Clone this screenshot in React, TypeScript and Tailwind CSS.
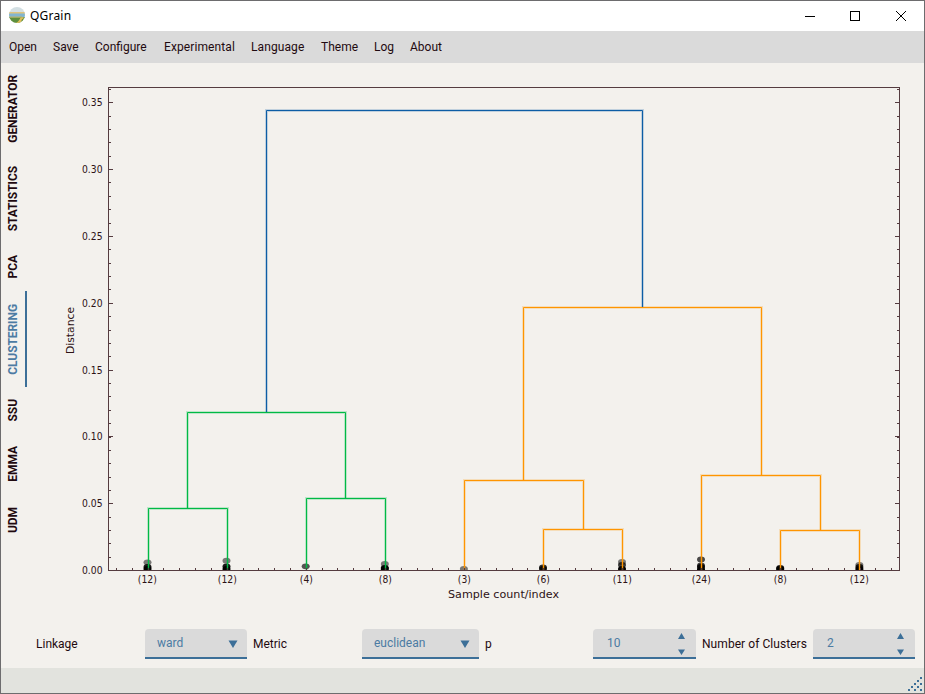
const INK = '#2d1215';
const AXIS = '#553c40';
const BLUE = '#0c5da5';
const GREEN = '#00b945';
const ORANGE = '#ff9500';

const menus = [
  ['Open', 'w-11'],
  ['Save', 'w-[42px]'],
  ['Configure', 'w-[69px]'],
  ['Experimental', 'w-[87px] tracking-[0.1px]'],
  ['Language', 'w-[70px] tracking-[0.1px]'],
  ['Theme', 'w-[53px]'],
  ['Log', 'w-9'],
  ['About', 'w-12'],
];

const tabs = [
  ['GENERATOR', 'h-[92px]'],
  ['STATISTICS', 'h-[88px]'],
  ['PCA', 'h-12'],
  ['CLUSTERING', 'h-24'],
  ['SSU', 'h-[46px]'],
  ['EMMA', 'h-[61px]'],
  ['UDM', 'h-[51px]'],
];

const majors = [
  [570, '0.00'], [503, '0.05'], [436, '0.10'], [370, '0.15'],
  [303, '0.20'], [236, '0.25'], [169, '0.30'], [102, '0.35'],
] as const;

const leaves = [
  [147, '(12)'], [227, '(12)'], [306, '(4)'], [385, '(8)'], [464, '(3)'],
  [543, '(6)'], [622, '(11)'], [701, '(24)'], [780, '(8)'], [859, '(12)'],
] as const;

// Each link: left x, left foot y, top y, right x, right foot y
const links: [string, number, number, number, number, number][] = [
  [GREEN, 148, 570, 508, 227, 570],
  [GREEN, 306, 570, 498, 385, 570],
  [GREEN, 187, 508, 412, 345, 498],
  [ORANGE, 543, 570, 529, 622, 570],
  [ORANGE, 464, 570, 480, 583, 529],
  [ORANGE, 780, 570, 530, 859, 570],
  [ORANGE, 701, 570, 475, 820, 530],
  [ORANGE, 523, 480, 307, 761, 475],
  [BLUE, 266, 412, 110, 642, 307],
];

// Sample markers: x, y, opacity
const dots: [number, number, number][] = [
  [147.5, 562.3, 0.5], [147.5, 567, 0.9], [147.5, 569, 1],
  [226.5, 560.7, 0.5], [226.5, 566.5, 0.9], [226.5, 569, 1],
  [305.7, 566.3, 0.65],
  [384.8, 564, 0.5], [384.8, 567.8, 0.95], [384.8, 569, 1],
  [463.9, 568.8, 0.5],
  [543, 567.5, 0.8], [543, 569, 0.8],
  [622, 562, 0.5], [622, 565, 0.75], [622, 569, 1],
  [701, 559.4, 0.7], [701, 565.5, 0.75], [701, 567, 0.9], [701, 569.5, 1],
  [780.2, 568, 0.9], [780.2, 569, 1],
  [859.4, 564.8, 0.5], [859.4, 567, 0.85], [859.4, 569, 1],
];

function Dendrogram() {
  const yMinor = Array.from({ length: 37 }, (_, i) => Math.round(570.2 - i * 13.37)).filter((y) => y > 87);
  const xMinor = Array.from({ length: 50 }, (_, i) => Math.round(116 + i * 15.82)).filter((x) => x < 899);
  return (
    <svg width="897" height="556" viewBox="27 63 897 556" className="block" fontFamily='"DejaVu Sans", sans-serif' fill={INK}>
      <defs>
        <clipPath id="plot"><rect x="109" y="88" width="790" height="482" /></clipPath>
      </defs>
      <g clipPath="url(#plot)">
        {dots.map(([x, y, o], i) => <ellipse key={i} cx={x} cy={y} rx="4" ry="2.9" fill="#000" opacity={o} />)}
      </g>
      {links.map(([c, x1, f1, t, x2, f2], i) => {
        const d = `M${x1 + 0.5} ${f1}V${t + 0.5}H${x2 + 0.5}V${f2}`;
        return (
          <g key={i} fill="none" stroke={c}>
            <path d={d} strokeWidth="3" opacity="0.22" />
            <path d={d} strokeWidth="1" />
          </g>
        );
      })}
      <g stroke={AXIS} fill="none" shapeRendering="crispEdges">
        <rect x="108.5" y="87.5" width="791" height="483" />
        {yMinor.map((y) => <path key={y} d={`M109 ${y + 0.5}h2M899 ${y + 0.5}h-2`} />)}
        {majors.map(([y]) => <path key={y} d={`M109 ${y + 0.5}h4M899 ${y + 0.5}h-4`} />)}
        {xMinor.map((x) => <path key={x} d={`M${x + 0.5} 570v-2`} />)}
      </g>
      <g fontSize="10">
        {majors.map(([y, s]) => <text key={s} x="82" y={y + 4} textLength="20.5" lengthAdjust="spacingAndGlyphs">{s}</text>)}
        {leaves.map(([x, s]) => (
          <text key={x} x={x + 0.3} y="583" textAnchor="middle" textLength={s.length === 4 ? 19 : 13} lengthAdjust="spacingAndGlyphs">{s}</text>
        ))}
      </g>
      <text x="448" y="598" fontSize="11" textLength="111" lengthAdjust="spacingAndGlyphs">Sample count/index</text>
      <text transform="translate(74 354) rotate(-90)" fontSize="11" textLength="47" lengthAdjust="spacingAndGlyphs">Distance</text>
    </svg>
  );
}

function Combo({ value, width }: { value: string; width: string }) {
  return (
    <div className={`${width} flex h-[30px] shrink-0 items-center justify-between rounded-t border-b-2 border-[#3c6f98] bg-[#dadada] pl-3 pr-[9px] text-[#4c7ba3]`}>
      <span>{value}</span>
      <svg width="10" height="8" viewBox="0 0 10 8" className="mt-0.5"><path d="M0.5 0.5h9L5 8z" fill="#3c6f98" /></svg>
    </div>
  );
}

function Spin({ value, width }: { value: string; width: string }) {
  return (
    <div className={`${width} flex h-[30px] shrink-0 items-center justify-between rounded-t border-b-2 border-[#3c6f98] bg-[#dadada] pl-3.5 pr-[11px] text-[#4c7ba3]`}>
      <span>{value}</span>
      <svg width="7" height="22" viewBox="0 0 7 22" className="mt-0.5" fill="#3c6f98">
        <path d="M0 6h7L3.5 0zM0 16.5h7L3.5 22z" />
      </svg>
    </div>
  );
}

export default function App() {
  return (
    <div className="flex h-[694px] w-[925px] flex-col overflow-hidden border border-[#6d6c6e] bg-[#f3f1ed] font-['Roboto',sans-serif] text-xs text-[#1f0a10]">
      <header className="flex h-[30px] shrink-0 items-center bg-white pl-2 text-black">
        <svg width="16" height="16" viewBox="0 0 16 16" className="-mt-0.5 shrink-0">
          <defs><clipPath id="logo"><circle cx="8" cy="8" r="8" /></clipPath></defs>
          <g clipPath="url(#logo)">
            <path d="M0 0h16v6H0z" fill="#d3dfe3" />
            <path d="M0 5h16v2H0z" fill="#dfc47d" />
            <path d="M0 6.5h16V11H0z" fill="#82b5cf" />
            <path d="M0 10h16v6H0z" fill="#5d8f3d" />
            <path d="M0 9.5h13v1.2H0z" fill="#b4b56d" />
            <path d="M14 10c-5 1-1 2-7 6h4c3-3 0-3 4-5z" fill="#e0bd5c" />
          </g>
        </svg>
        <span className="ml-[5px] font-['Noto_Sans',sans-serif] text-[12px] tracking-[0.2px]">QGrain</span>
        <div className="ml-auto flex items-center pr-4">
          <svg width="104" height="12" viewBox="0 0 104 12" fill="none" stroke="#000">
            <path d="M1 6.5h10" shapeRendering="crispEdges" />
            <rect x="46.5" y="1.5" width="9" height="9" shapeRendering="crispEdges" />
            <path d="M92 1l10 10M102 1L92 11" />
          </svg>
        </div>
      </header>
      <nav className="flex h-8 shrink-0 items-center bg-[#dadada] pl-2">
        {menus.map(([m, w]) => <span key={m} className={w}>{m}</span>)}
      </nav>
      <main className="flex h-[605px] shrink-0">
        <aside className="flex w-[26px] shrink-0 flex-col font-bold">
          {tabs.map(([t, h]) => (
            <div key={t} className={`${h} flex shrink-0 items-center justify-center border-r-2 ${t === 'CLUSTERING' ? 'border-[#3c6f98] text-[#4c7ba3]' : 'border-transparent'}`}>
              <span className="rotate-180 whitespace-nowrap tracking-[-0.08px] [writing-mode:vertical-rl]">{t}</span>
            </div>
          ))}
        </aside>
        <section className="flex w-[897px] flex-col">
          <Dendrogram />
          <div className="flex h-[49px] items-center pl-[9px]">
            <span className="w-[109px] shrink-0">Linkage</span>
            <Combo value="ward" width="w-[102px]" />
            <span className="ml-1.5 w-[109px] shrink-0">Metric</span>
            <Combo value="euclidean" width="w-[117px]" />
            <span className="ml-1.5 w-[108px] shrink-0">p</span>
            <Spin value="10" width="w-[103px]" />
            <span className="ml-1.5 w-[111px] shrink-0 whitespace-nowrap tracking-[0.06px]">Number of Clusters</span>
            <Spin value="2" width="w-[102px]" />
          </div>
        </section>
      </main>
      <footer className="flex min-h-0 flex-1 items-end justify-end bg-[#e2e3de] pb-[2px] pr-[2px]">
        <svg width="14" height="14" viewBox="0 0 14 14" fill="#3c6f98">
          <path d="M12 0h2v2h-2zM9 3h2v2H9zM12 6h2v2h-2zM6 6h2v2H6zM9 9h2v2H9zM3 9h2v2H3zM0 12h2v2H0zM6 12h2v2H6zM12 12h2v2h-2z" />
        </svg>
      </footer>
    </div>
  );
}
